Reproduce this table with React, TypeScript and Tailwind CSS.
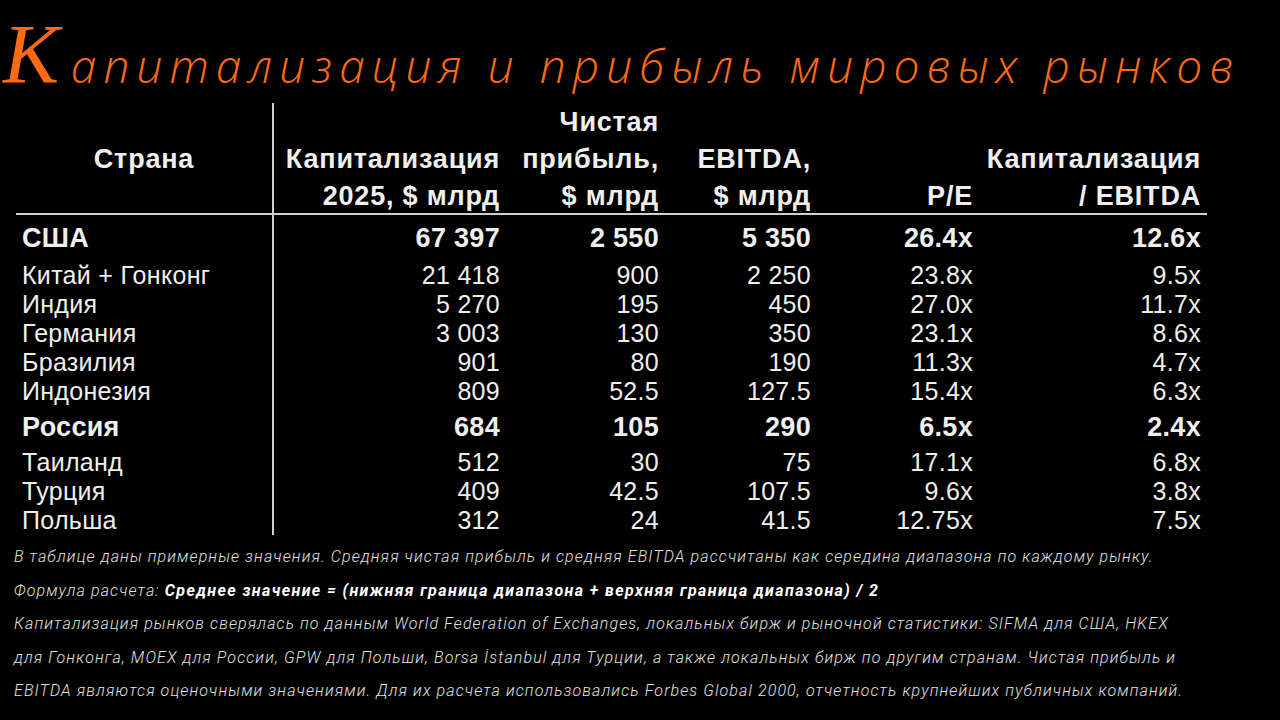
const rows = [
  { c: 'США', cap: '67 397', np: '2 550', eb: '5 350', pe: '26.4x', ce: '12.6x', bold: true, h: 'h-[46px]' },
  { c: 'Китай + Гонконг', cap: '21 418', np: '900', eb: '2 250', pe: '23.8x', ce: '9.5x', bold: false, h: 'h-[29px]' },
  { c: 'Индия', cap: '5 270', np: '195', eb: '450', pe: '27.0x', ce: '11.7x', bold: false, h: 'h-[29px]' },
  { c: 'Германия', cap: '3 003', np: '130', eb: '350', pe: '23.1x', ce: '8.6x', bold: false, h: 'h-[29px]' },
  { c: 'Бразилия', cap: '901', np: '80', eb: '190', pe: '11.3x', ce: '4.7x', bold: false, h: 'h-[29px]' },
  { c: 'Индонезия', cap: '809', np: '52.5', eb: '127.5', pe: '15.4x', ce: '6.3x', bold: false, h: 'h-[29px]' },
  { c: 'Россия', cap: '684', np: '105', eb: '290', pe: '6.5x', ce: '2.4x', bold: true, h: 'h-[42px]' },
  { c: 'Таиланд', cap: '512', np: '30', eb: '75', pe: '17.1x', ce: '6.8x', bold: false, h: 'h-[29px]' },
  { c: 'Турция', cap: '409', np: '42.5', eb: '107.5', pe: '9.6x', ce: '3.8x', bold: false, h: 'h-[29px]' },
  { c: 'Польша', cap: '312', np: '24', eb: '41.5', pe: '12.75x', ce: '7.5x', bold: false, h: 'h-[29px]' },
]

const headers = [
  ['Капитализация', '2025, $ млрд'],
  ['Чистая', 'прибыль,', '$ млрд'],
  ['EBITDA,', '$ млрд'],
  ['P/E'],
  ['Капитализация', '/ EBITDA'],
]

export default function App() {
  return (
    <div className="w-[1280px] h-[720px] bg-black overflow-hidden text-[#efefef]">
      {/* title */}
      <div className="flex items-baseline h-[103px] pl-[3px] pt-[13px] text-[#ff6a12]">
        <span className="text-[84px] leading-[84px] italic"
          style={{ fontFamily: '"Liberation Serif", serif' }}>К</span>
        <span className="text-[46px] font-light italic tracking-[7.1px] ml-[12px] whitespace-nowrap"
          style={{ fontFamily: '"Open Sans", sans-serif' }}>
          апитализация и прибыль мировых рынков
        </span>
      </div>

      {/* table */}
      <div className="ml-[16px] grid grid-cols-[258px_232px_159px_152px_162px_228px]"
        style={{ fontFamily: '"Liberation Sans", Arial, sans-serif' }}>
        <div className="h-[112px] border-r-2 border-b-2 border-[#cfcfcf] flex flex-col justify-end items-center text-[27px] font-bold leading-[37px] tracking-[0.8px]">
          <div className="-mb-[2px] flex flex-col items-center">
            <span>Страна</span>
            <span className="h-[37px]" />
          </div>
        </div>
        {headers.map((lines, i) => (
          <div key={i} className="h-[112px] border-b-2 border-[#cfcfcf] flex flex-col justify-end pr-[6px] text-[27px] font-bold leading-[37px] tracking-[0.8px]">
            <div className="-mb-[2px] flex flex-col items-end">
              {lines.map(l => <span key={l} className="whitespace-nowrap">{l}</span>)}
            </div>
          </div>
        ))}

        {rows.map(r => {
          const t = r.bold ? 'text-[27px] font-bold tracking-[0.3px]' : 'text-[25px] tracking-[0.3px]'
          return [
            <div key={r.c} className={`${r.h} ${t} border-r-2 border-[#cfcfcf] flex items-center pl-[6px] whitespace-nowrap`}>{r.c}</div>,
            ...[r.cap, r.np, r.eb, r.pe, r.ce].map((v, j) => (
              <div key={r.c + j} className={`${r.h} ${t} flex items-center justify-end pr-[6px] whitespace-nowrap`}>{v}</div>
            )),
          ]
        })}
      </div>

      {/* notes */}
      <div className="px-[14px] mt-[5px] text-[16px] italic font-light leading-[33.5px] tracking-[1.1px] text-[#e2e2e2] whitespace-nowrap"
        style={{ fontFamily: 'Roboto, sans-serif' }}>
        <p>В таблице даны примерные значения. Средняя чистая прибыль и средняя EBITDA рассчитаны как середина диапазона по каждому рынку.</p>
        <p>Формула расчета: <b className="font-bold text-white tracking-[1.4px]">Среднее значение = (нижняя граница диапазона + верхняя граница диапазона) / 2</b></p>
        <p>Капитализация рынков сверялась по данным World Federation of Exchanges, локальных бирж и рыночной статистики: SIFMA для США, HKEX</p>
        <p>для Гонконга, MOEX для России, GPW для Польши, Borsa İstanbul для Турции, а также локальных бирж по другим странам. Чистая прибыль и</p>
        <p>EBITDA являются оценочными значениями. Для их расчета использовались Forbes Global 2000, отчетность крупнейших публичных компаний.</p>
      </div>
    </div>
  )
}
